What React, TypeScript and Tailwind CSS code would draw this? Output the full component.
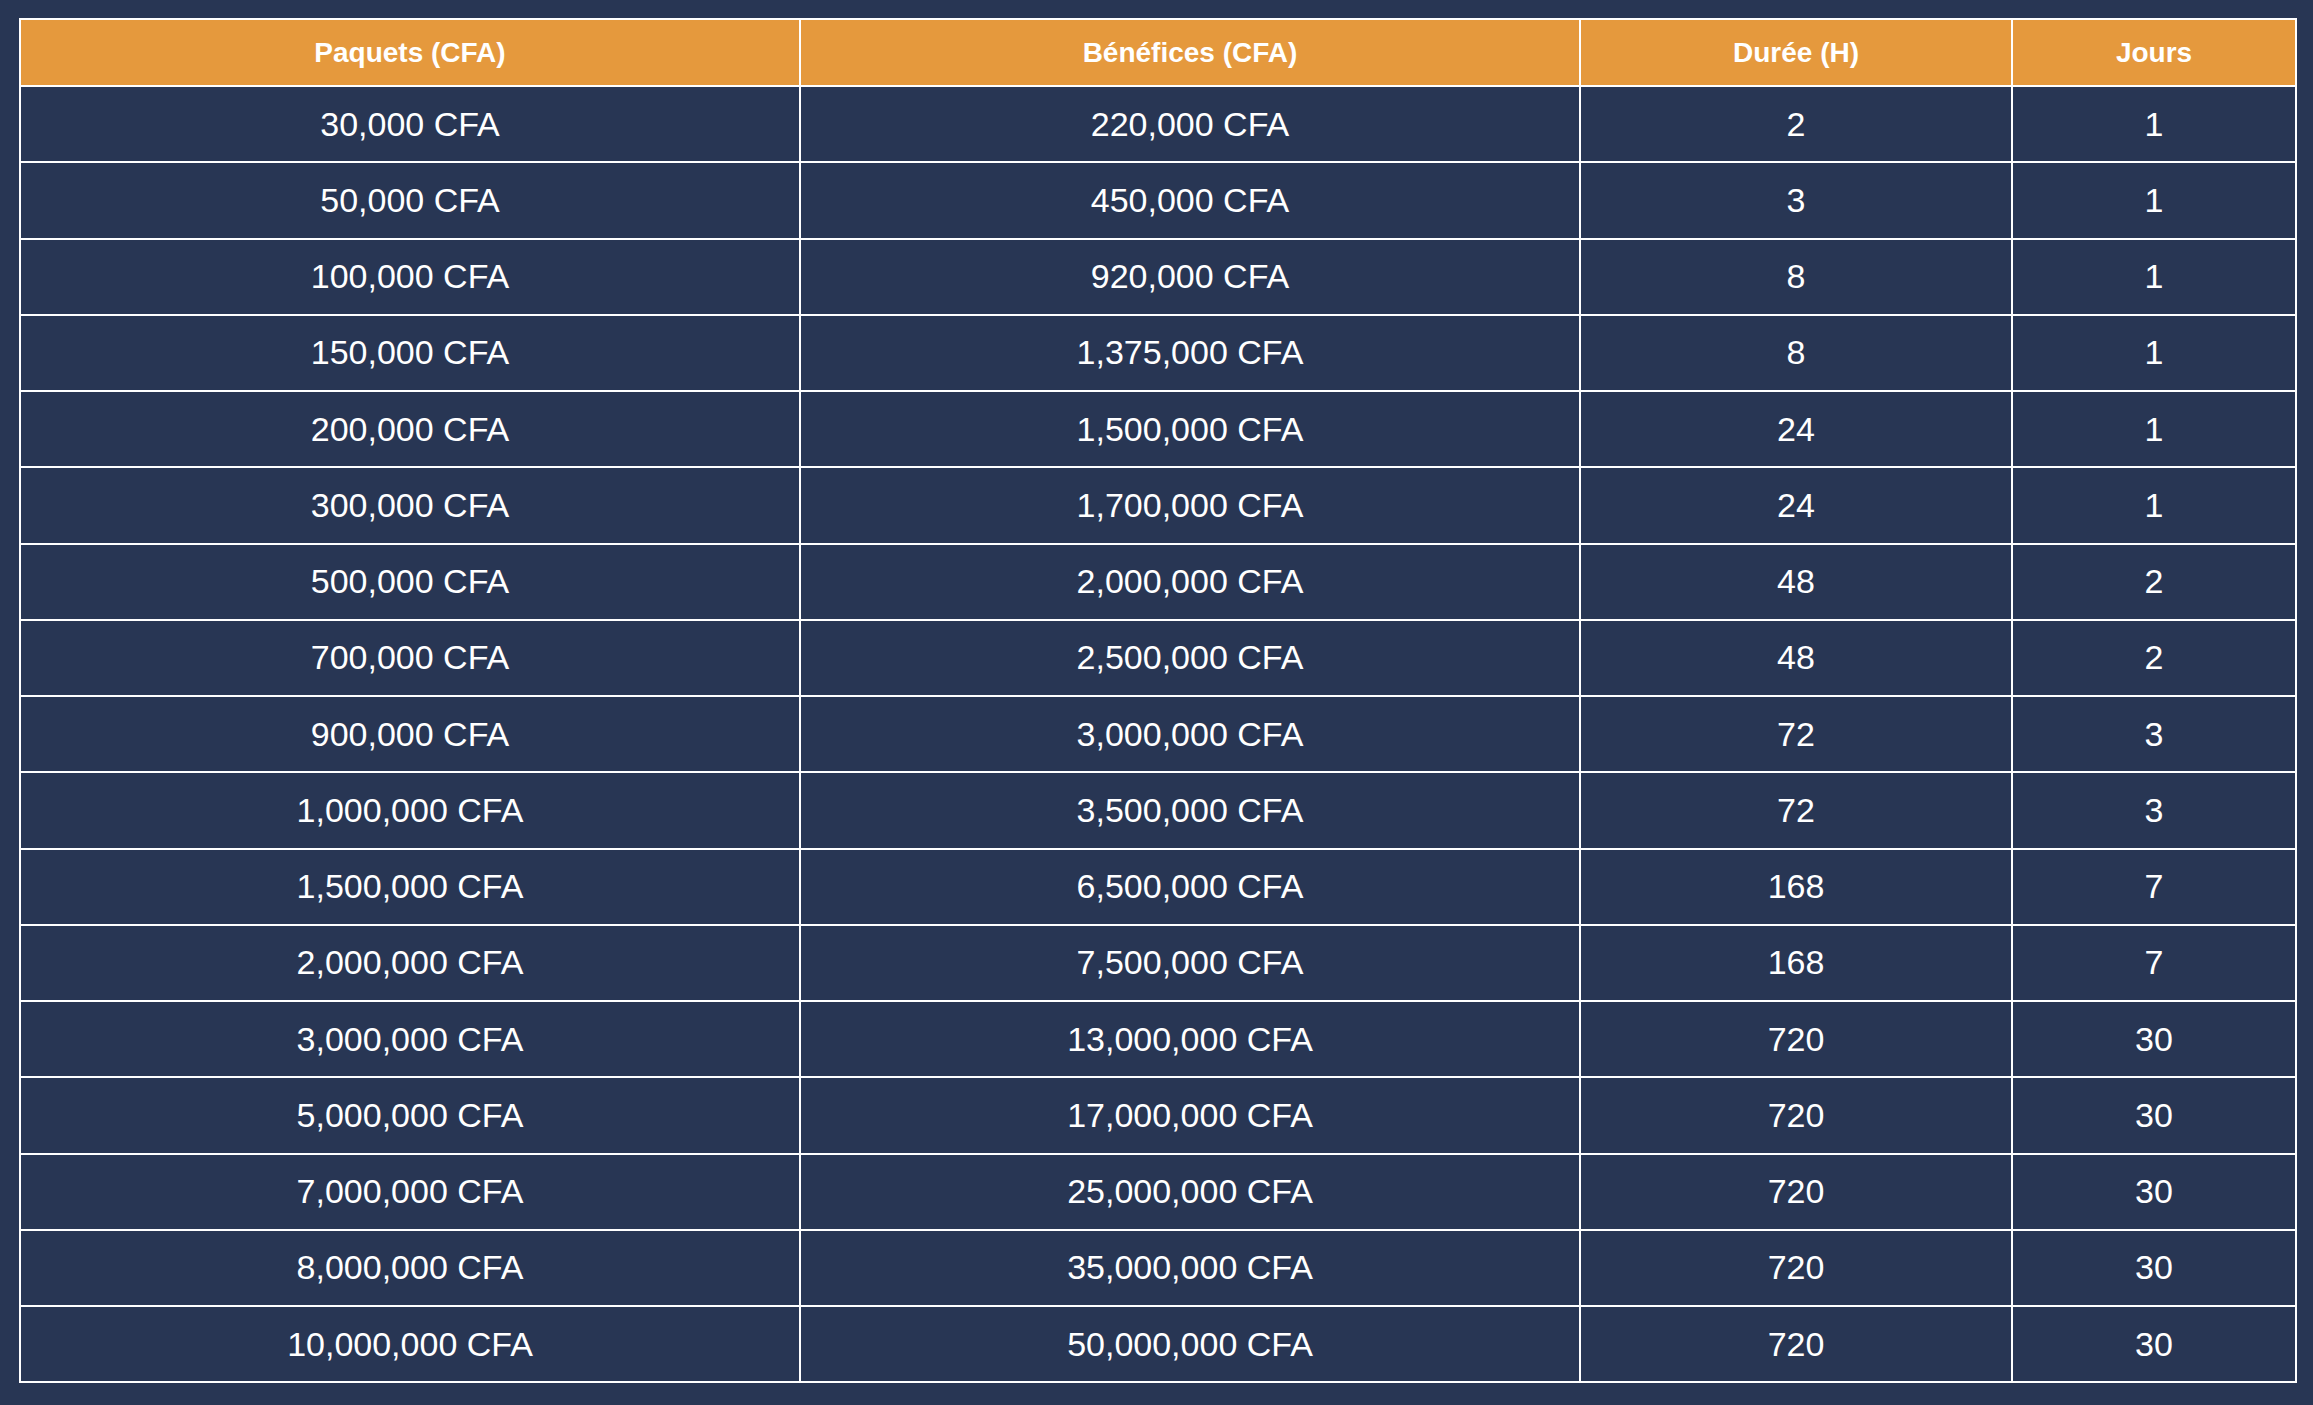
import React from "react";

const rows: [string, string, string, string][] = [
  ["30,000 CFA", "220,000 CFA", "2", "1"],
  ["50,000 CFA", "450,000 CFA", "3", "1"],
  ["100,000 CFA", "920,000 CFA", "8", "1"],
  ["150,000 CFA", "1,375,000 CFA", "8", "1"],
  ["200,000 CFA", "1,500,000 CFA", "24", "1"],
  ["300,000 CFA", "1,700,000 CFA", "24", "1"],
  ["500,000 CFA", "2,000,000 CFA", "48", "2"],
  ["700,000 CFA", "2,500,000 CFA", "48", "2"],
  ["900,000 CFA", "3,000,000 CFA", "72", "3"],
  ["1,000,000 CFA", "3,500,000 CFA", "72", "3"],
  ["1,500,000 CFA", "6,500,000 CFA", "168", "7"],
  ["2,000,000 CFA", "7,500,000 CFA", "168", "7"],
  ["3,000,000 CFA", "13,000,000 CFA", "720", "30"],
  ["5,000,000 CFA", "17,000,000 CFA", "720", "30"],
  ["7,000,000 CFA", "25,000,000 CFA", "720", "30"],
  ["8,000,000 CFA", "35,000,000 CFA", "720", "30"],
  ["10,000,000 CFA", "50,000,000 CFA", "720", "30"],
];

const headers = ["Paquets (CFA)", "Bénéfices (CFA)", "Durée (H)", "Jours"];

export default function App() {
  return (
    <div
      className="w-[2313px] h-[1405px] overflow-hidden bg-[#283654] pt-[18px] pl-[19px]"
      style={{ fontFamily: '"Liberation Sans", Arial, sans-serif' }}
    >
      <div className="grid w-[2278px] grid-cols-[778px_778px_430px_282px] gap-[2px] bg-white p-[2px]">
        {headers.map((h) => (
          <div
            key={h}
            className="flex h-[65px] items-center justify-center bg-[#e5993d] text-[28px] font-bold text-white"
          >
            {h}
          </div>
        ))}
        {rows.map((r, i) =>
          r.map((c, j) => (
            <div
              key={`${i}-${j}`}
              className="flex h-[74.25px] items-center justify-center bg-[#283654] text-[34px] text-white"
            >
              {c}
            </div>
          ))
        )}
      </div>
    </div>
  );
}
